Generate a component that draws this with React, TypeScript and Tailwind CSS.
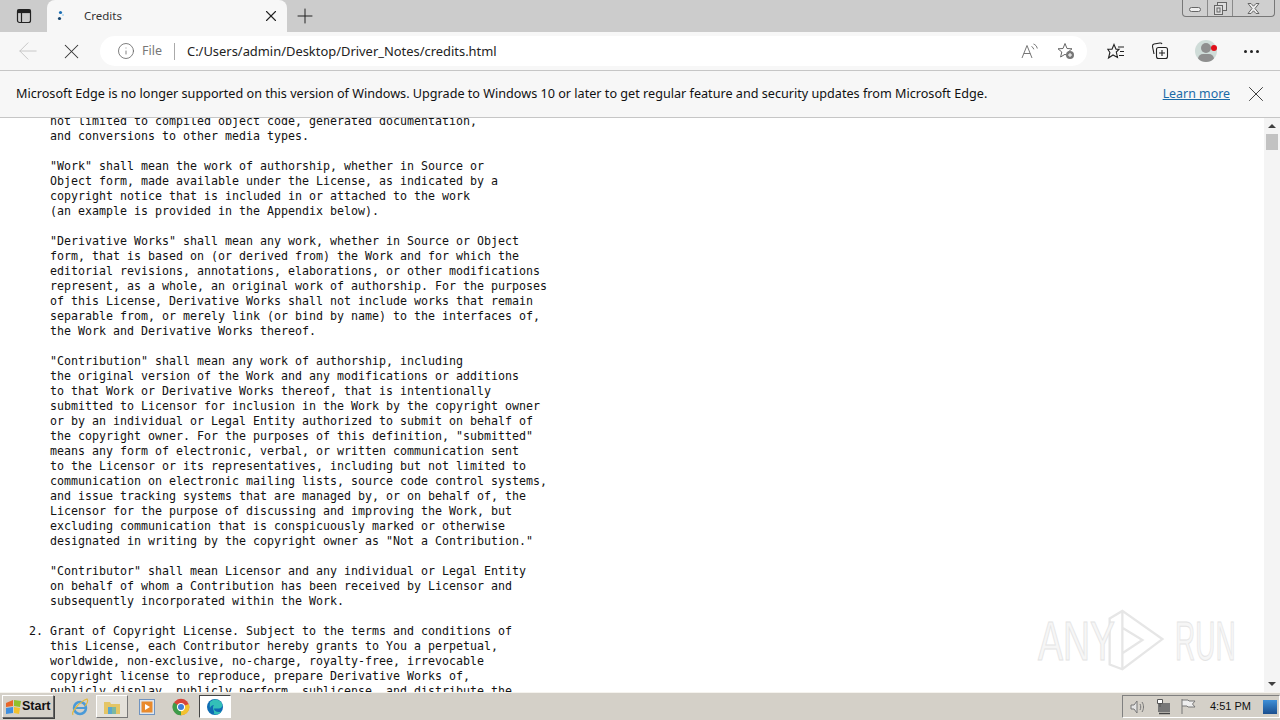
import { Info, Plus, X, ArrowLeft } from "lucide-react";

const licenseText = `   not limited to compiled object code, generated documentation,
   and conversions to other media types.

   "Work" shall mean the work of authorship, whether in Source or
   Object form, made available under the License, as indicated by a
   copyright notice that is included in or attached to the work
   (an example is provided in the Appendix below).

   "Derivative Works" shall mean any work, whether in Source or Object
   form, that is based on (or derived from) the Work and for which the
   editorial revisions, annotations, elaborations, or other modifications
   represent, as a whole, an original work of authorship. For the purposes
   of this License, Derivative Works shall not include works that remain
   separable from, or merely link (or bind by name) to the interfaces of,
   the Work and Derivative Works thereof.

   "Contribution" shall mean any work of authorship, including
   the original version of the Work and any modifications or additions
   to that Work or Derivative Works thereof, that is intentionally
   submitted to Licensor for inclusion in the Work by the copyright owner
   or by an individual or Legal Entity authorized to submit on behalf of
   the copyright owner. For the purposes of this definition, "submitted"
   means any form of electronic, verbal, or written communication sent
   to the Licensor or its representatives, including but not limited to
   communication on electronic mailing lists, source code control systems,
   and issue tracking systems that are managed by, or on behalf of, the
   Licensor for the purpose of discussing and improving the Work, but
   excluding communication that is conspicuously marked or otherwise
   designated in writing by the copyright owner as "Not a Contribution."

   "Contributor" shall mean Licensor and any individual or Legal Entity
   on behalf of whom a Contribution has been received by Licensor and
   subsequently incorporated within the Work.

2. Grant of Copyright License. Subject to the terms and conditions of
   this License, each Contributor hereby grants to You a perpetual,
   worldwide, non-exclusive, no-charge, royalty-free, irrevocable
   copyright license to reproduce, prepare Derivative Works of,
   publicly display, publicly perform, sublicense, and distribute the`;

const uiFont = "[font-family:'Noto_Sans',sans-serif]";

function TabStrip() {
  return (
    <div className="flex h-8 shrink-0 bg-[#cccccc]">
      <div className="flex w-[47px] items-center justify-center pl-[1px]">
        <svg width="16" height="16" viewBox="0 0 16 16" fill="none" stroke="#222" strokeWidth="1.2">
          <rect x="1.5" y="1.5" width="13" height="13" rx="2" />
          <path d="M1.5 4.5h13M5.5 4.5v10" />
          <rect x="2" y="2" width="12" height="2.5" fill="#222" />
        </svg>
      </div>
      <div className="flex w-[240px] items-center rounded-t-lg bg-[#f7f7f7] pl-[10px] pr-[7px]">
        <svg width="8" height="12" viewBox="0 0 8 12">
          <circle cx="3.5" cy="2.5" r="1.6" fill="#1b6fb5" />
          <circle cx="2.5" cy="8.5" r="1.6" fill="#17466f" />
          <circle cx="6" cy="5" r="0.8" fill="#7cc0ea" />
        </svg>
        <span className={`ml-[19px] flex-1 text-[11.5px] text-[#333] ${uiFont}`}>Credits</span>
        <X size={18} strokeWidth={1.5} className="text-[#222]" />
      </div>
      <div className="ml-[6px] flex items-center">
        <Plus size={24} strokeWidth={1} className="text-[#222]" />
      </div>
      <div className="flex-1" />
      <div className="mr-[5px] flex h-[17px] w-[93px] overflow-hidden rounded-b border border-t-0 border-[#777] bg-[#cfcfcf]">
        <div className="flex w-[25px] items-center justify-center border-r border-[#8a8a8a]">
          <div className="mt-[3px] h-[5px] w-[12px] rounded-sm border border-[#666] bg-[#eee]" />
        </div>
        <div className="flex w-[25px] items-center justify-center border-r border-[#8a8a8a]">
          <svg width="13" height="13" viewBox="0 0 13 13" fill="none" stroke="#666">
            <rect x="3.5" y="0.5" width="9" height="8" fill="#ddd" />
            <rect x="0.5" y="3.5" width="8" height="9" fill="#ddd" />
            <rect x="3" y="6" width="3" height="4" />
          </svg>
        </div>
        <div className="flex flex-1 items-center justify-center">
          <svg width="13" height="11" viewBox="0 0 13 11" fill="#eee" stroke="#666">
            <path d="M1 .5h3l2.500 2.700L9 .5h3L8 5.500l4 5H9L6.500 7.800 4 10.500H1l4-5z" />
          </svg>
        </div>
      </div>
    </div>
  );
}

function Toolbar() {
  return (
    <div className="flex h-[39px] shrink-0 items-center border-b border-[#c6c6c6] bg-[#f7f7f7]">
      <div className="flex w-[56px] justify-center">
        <ArrowLeft size={28} strokeWidth={0.8} className="text-[#c4c4c4]" />
      </div>
      <div className="flex w-[30px] justify-center">
        <X size={25} strokeWidth={1} className="text-[#333]" />
      </div>
      <div className="ml-[14px] flex h-[30px] w-[987px] items-center rounded-full bg-white pl-[17px] pr-[12px]">
        <Info size={18} strokeWidth={1.1} className="text-[#666]" />
        <span className={`ml-[7px] mt-[1px] text-[12.5px] text-[#777] ${uiFont}`}>File</span>
        <div className="ml-[12px] h-[17px] w-px bg-[#aaa]" />
        <span className={`ml-[12px] mt-[1px] flex-1 text-[12.92px] text-[#222] ${uiFont}`}>
          C:/Users/admin/Desktop/Driver_Notes/credits.html
        </span>
        <svg width="18" height="16" viewBox="0 0 18 16" fill="none" stroke="#777" strokeWidth="1">
          <path d="M1 15 6 2.500 11 15M2.800 10.500h6.500" />
          <path d="M10.500 3.500c1.200.500 2 1.500 2.300 2.800M12.500 1c2 .7 3.300 2.200 3.800 4.500" />
        </svg>
        <svg className="ml-[18px]" width="18" height="18" viewBox="0 0 18 18" fill="none" stroke="#666">
          <path d="M8 1.500 10 6.500l5 .3-3.800 3.200 1.200 5-4.400-2.700-4.400 2.700 1.200-5L1 6.800l5-.3z" />
          <circle cx="13" cy="13" r="4" fill="#777" stroke="none" />
          <path d="M13 11v4M11 13h4" stroke="#fff" />
        </svg>
      </div>
      <svg className="ml-[20px]" width="18" height="17" viewBox="0 0 18 17" fill="none" stroke="#222" strokeWidth="1.1">
        <path d="M7 1.500 9 6.300h3L9.300 9l1.200 5.500L6 12l-4.500 3 1.400-5.500L.8 6.300H5z" />
        <path d="M11 4h6M13 8.500h4M12 12.500h5" />
      </svg>
      <svg className="ml-[26px]" width="18" height="18" viewBox="0 0 18 18" fill="none" stroke="#222" strokeWidth="1.1">
        <path d="M3 12 1.500 4.500q-.3-2 1.500-2.500l6-1q1.500-.2 2 1" />
        <rect x="5.500" y="5.500" width="11" height="11" rx="2" fill="#f7f7f7" />
        <path d="M11 8v6M8 11h6" />
      </svg>
      <div className="relative ml-[26px] h-[22px] w-[22px] overflow-hidden rounded-full bg-[#cfdcd8]">
        <div className="absolute left-[6px] top-[3px] h-[10px] w-[10px] rounded-full bg-[#8f8f8f]" />
        <div className="absolute left-[3px] top-[14px] h-[10px] w-[16px] rounded-full bg-[#8f8f8f]" />
      </div>
      <div className="relative -ml-[6px] -mt-[6px] h-[6px] w-[6px] rounded-full bg-[#e0101a]" />
      <div className="ml-[27px] flex gap-[2px]">
        <div className="h-[3px] w-[3px] rounded-full bg-[#222]" />
        <div className="ml-[1px] h-[3px] w-[3px] rounded-full bg-[#222]" />
        <div className="ml-[1px] h-[3px] w-[3px] rounded-full bg-[#222]" />
      </div>
    </div>
  );
}

function InfoBar() {
  return (
    <div className="flex h-[47px] shrink-0 items-center border-b border-[#c6c6c6] bg-[#f7f7f7] pb-[2px] pl-4 pr-[11px]">
      <span className={`flex-1 whitespace-nowrap text-[12.64px] text-[#111] ${uiFont}`}>
        Microsoft Edge is no longer supported on this version of Windows. Upgrade to Windows 10 or later to get regular feature and security updates from Microsoft Edge.
      </span>
      <a className={`mt-[2px] text-[12.4px] text-[#1a6aa8] underline ${uiFont}`}>Learn more</a>
      <X size={26} strokeWidth={0.8} className="ml-[13px] mt-[2px] text-[#222]" />
    </div>
  );
}

function Scrollbar() {
  return (
    <div className="flex w-4 shrink-0 flex-col items-center bg-[#f4f4f4]">
      <div className="mt-[6px] h-0 w-0 border-x-[4px] border-b-[4px] border-x-transparent border-b-[#404040]" />
      <div className="mt-[6px] h-4 w-3 bg-[#c2c2c2]" />
      <div className="flex-1" />
      <div className="mb-[6px] h-0 w-0 border-x-[4px] border-t-[4px] border-x-transparent border-t-[#404040]" />
    </div>
  );
}

function Watermark() {
  const outline = "block origin-left text-[56px] leading-none text-[#f6f6f6] [-webkit-text-stroke:1px_#e4e4e4] [font-family:'Liberation_Sans',sans-serif]";
  return (
    <div className="pointer-events-none absolute bottom-[16px] left-[1038px] flex h-[70px] w-[196px] items-center">
      <div className="w-[68px] shrink-0">
        <span className={`${outline} scale-x-[0.67]`}>ANY</span>
      </div>
      <svg width="60" height="64" viewBox="0 0 66 68" fill="none" stroke="#e6e6e6" strokeWidth="2.500" className="shrink-0" preserveAspectRatio="none">
        <path d="M4 10 18 2l44 30-44 32-14-5zM18 2v62M4 10v49M18 20l22 13-22 14" />
      </svg>
      <div className="ml-[9px] w-[58px] shrink-0">
        <span className={`${outline} scale-x-[0.5]`}>RUN</span>
      </div>
    </div>
  );
}

function Taskbar() {
  return (
    <div className="flex h-7 shrink-0 items-center border-t border-[#f5f3ee] bg-[#d4d0c8] pl-[2px]">
      <div className="flex h-[23px] w-[52px] items-center border border-[#666] border-t-white border-l-white pl-[2px] shadow-[1px_1px_0_#404040]">
        <svg width="17" height="16" viewBox="0 0 17 16">
          <path d="M1 4 8 1v6L1 8z" fill="#e8662a" />
          <path d="M9 1l7 1-1 6-6-1z" fill="#8fc02c" />
          <path d="M1 9l7-1v6l-7 1z" fill="#3f8fe0" />
          <path d="M9 8l6 1-1 6-5-1z" fill="#f2c12d" />
        </svg>
        <span className="text-[12.5px] font-bold text-[#111] [font-family:'Liberation_Sans',sans-serif]">Start</span>
      </div>
      <div className="ml-[13px] flex w-[26px] justify-center">
        <svg width="20" height="20" viewBox="0 0 20 20" fill="none">
          <circle cx="10" cy="11" r="6" stroke="#4a9ad8" strokeWidth="2.500" />
          <path d="M5 11h10" stroke="#4a9ad8" strokeWidth="2" />
          <path d="M3 18C1 15 9 5 17 2c2 2-1 6-2 7" stroke="#e3b93c" strokeWidth="1.200" />
        </svg>
      </div>
      <div className="ml-[3px] flex h-[23px] w-[32px] items-center justify-center border border-[#777] border-t-white border-l-white bg-[#e4e1da]">
        <svg width="18" height="16" viewBox="0 0 18 16">
          <path d="M1 3h6l1 2h9v10H1z" fill="#e4c565" />
          <rect x="5" y="8" width="4" height="7" fill="#5aa7cf" />
          <rect x="9" y="8" width="4" height="7" fill="#7db8a0" />
        </svg>
      </div>
      <div className="ml-[9px] flex w-[20px] justify-center">
        <svg width="16" height="16" viewBox="0 0 16 16">
          <rect x="0.500" y="0.500" width="15" height="15" fill="#dfe6ee" stroke="#6f93c0" />
          <rect x="2.500" y="2.500" width="11" height="11" fill="#e98a2c" />
          <path d="M6 5l5 3-5 3z" fill="#fff" />
        </svg>
      </div>
      <div className="ml-[14px] flex w-[20px] justify-center">
        <svg width="18" height="18" viewBox="0 0 24 24">
          <circle cx="12" cy="12" r="11" fill="#d8453a" />
          <path d="M12 12 22.500 8A11 11 0 0 1 12 23z" fill="#f2c230" />
          <path d="M12 12 12 23A11 11 0 0 1 2.500 6z" fill="#3d9c4a" />
          <circle cx="12" cy="12" r="5.500" fill="#fff" />
          <circle cx="12" cy="12" r="4" fill="#3f7fd8" />
        </svg>
      </div>
      <div className="ml-[8px] flex h-[23px] w-[32px] items-center justify-center border border-white border-t-[#444] border-l-[#444] bg-white">
        <svg width="18" height="18" viewBox="0 0 18 18">
          <circle cx="9" cy="9" r="8" fill="#0f6cb3" />
          <path d="M4 4c3-3.500 8-3.500 11 0 2 2.500 1.500 6.500-2 6.500H8c0 3 4 4.500 7.500 3-2 3-5.500 3.500-8 2.500C10 15 5 10 8 7c-1.500 0-3.500 1-4 3-.5-2 0-4.500 0-6z" fill="#33c0b8" />
        </svg>
      </div>
      <div className="flex-1" />
      <div className="flex h-[23px] w-[158px] shrink-0 items-center border border-[#808080] border-b-white border-r-white pl-[7px]">
        <svg width="16" height="16" viewBox="0 0 16 16" fill="none" stroke="#777">
          <path d="M1 6h3l3-4v12l-3-4H1z" fill="#e4e4e4" />
          <path d="M10 5c1 2 1 4 0 6M12 3c2 3 2 7 0 10" />
        </svg>
        <svg className="ml-[9px]" width="16" height="17" viewBox="0 0 16 17">
          <rect x="3" y="5" width="12" height="9" fill="#777" />
          <path d="M2.500 1.500h5v4h-5zM5 5.500V9" fill="#fff" stroke="#555" />
          <path d="M4 15.500h11" stroke="#444" strokeWidth="1.500" />
        </svg>
        <svg className="ml-[9px]" width="16" height="17" viewBox="0 0 16 17" fill="#eee" stroke="#777">
          <path d="M2 1v15M2 2h6l1 1h6l-2.500 3 2.500 3H8L7 8H2" />
        </svg>
        <span className="ml-[14px] whitespace-nowrap text-[11px] text-[#111] [font-family:'Liberation_Sans',sans-serif]">4:51 PM</span>
        <div className="ml-[12px] h-[14px] w-[14px] shrink-0 bg-gradient-to-b from-[#3f90d8] to-[#1b4f8f]" />
      </div>
    </div>
  );
}

export default function App() {
  return (
    <div className="flex h-screen w-full flex-col overflow-hidden bg-white">
      <TabStrip />
      <Toolbar />
      <InfoBar />
      <div className="relative flex min-h-0 flex-1">
        <div className="flex-1 overflow-hidden">
          <pre className="-mt-[4px] ml-[29px] whitespace-pre text-[11.63px] leading-[15px] text-[#111] [font-family:'DejaVu_Sans_Mono',monospace]">
            {licenseText}
          </pre>
        </div>
        <Scrollbar />
        <Watermark />
      </div>
      <Taskbar />
    </div>
  );
}
